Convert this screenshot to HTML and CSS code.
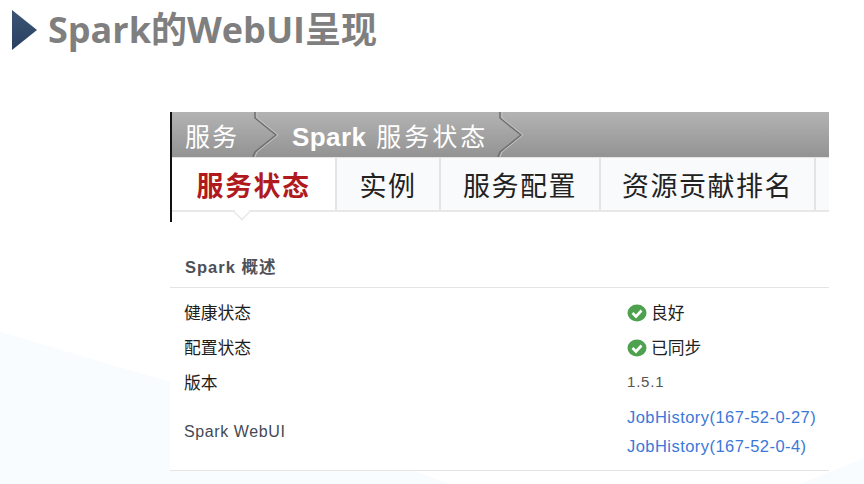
FILE: index.html
```html
<!DOCTYPE html>
<html lang="zh-CN">
<head>
  <meta charset="UTF-8">
  <title>Spark的WebUI呈现</title>
  <link rel="stylesheet" href="styles.css">
</head>
<body>

  <svg class="backdrop" width="864" height="484" viewBox="0 0 864 484">
    <polygon points="0,332 170,382 450,484 0,484" fill="#f8fcfe"/>
    <polygon points="800,484 864,458 864,484" fill="#f8fcfe"/>
  </svg>

  <div class="slide">
    <div class="title">
      <svg class="arrow" width="26" height="40" viewBox="0 0 26 40">
        <defs>
          <linearGradient id="arrowFill" x1="0" y1="0" x2="0" y2="1">
            <stop offset="0" stop-color="#3c5575"/>
            <stop offset="1" stop-color="#2a4060"/>
          </linearGradient>
        </defs>
        <polygon points="0,0 25,20 0,40" fill="url(#arrowFill)"/>
      </svg>
      <h1>Spark的WebUI呈现</h1>
    </div>

    <div class="panel">
      <div class="nav-top">
        <div class="crumbs">
          <span class="crumb-first">服务</span>
          <svg class="chevron" width="28" height="45" viewBox="0 0 28 45">
            <path d="M3 0 L3 6 L24 23 L3 40 L1 45" fill="none" stroke="#6f6f6f" stroke-width="1.5"/>
            <path d="M5 0 L5 6 L26 23 L5 40 L3 45" fill="none" stroke="#c4c4c4" stroke-width="1"/>
          </svg>
          <span class="crumb-current"><b>Spark</b> 服务状态</span>
          <svg class="chevron" width="28" height="45" viewBox="0 0 28 45">
            <path d="M3 0 L3 6 L24 23 L3 40 L1 45" fill="none" stroke="#6f6f6f" stroke-width="1.5"/>
            <path d="M5 0 L5 6 L26 23 L5 40 L3 45" fill="none" stroke="#c4c4c4" stroke-width="1"/>
          </svg>
        </div>

        <div class="tabs">
          <div class="tab active">服务状态</div>
          <div class="tab tab-instance">实例</div>
          <div class="tab tab-config">服务配置</div>
          <div class="tab tab-rank">资源贡献排名</div>
          <div class="tab tab-stub"></div>
        </div>
      </div>

      <div class="summary">
        <div class="summary-head">Spark 概述</div>

        <div class="row">
          <div class="label">健康状态</div>
          <div class="value">
            <svg class="check" width="20" height="18" viewBox="0 0 20 18">
              <ellipse cx="10" cy="9" rx="9.5" ry="8.5" fill="#4ea24f"/>
              <path d="M5.5 9 L9 12.5 L14.5 6.5" fill="none" stroke="#fff" stroke-width="2.6"/>
            </svg>
            良好
          </div>
        </div>
        <div class="row">
          <div class="label">配置状态</div>
          <div class="value">
            <svg class="check" width="20" height="18" viewBox="0 0 20 18">
              <ellipse cx="10" cy="9" rx="9.5" ry="8.5" fill="#4ea24f"/>
              <path d="M5.5 9 L9 12.5 L14.5 6.5" fill="none" stroke="#fff" stroke-width="2.6"/>
            </svg>
            已同步
          </div>
        </div>
        <div class="row">
          <div class="label">版本</div>
          <div class="value version">1.5.1</div>
        </div>
        <div class="row row-links">
          <div class="label latin">Spark WebUI</div>
          <div class="value links">
            <a href="#">JobHistory(167-52-0-27)</a>
            <a href="#">JobHistory(167-52-0-4)</a>
          </div>
        </div>
      </div>
    </div>
  </div>

</body>
</html>
```

FILE: styles.css
```css
html, body {
  margin: 0;
  height: 100%;
}

body {
  background: #fff;
  font-family: "Liberation Sans", "Noto Sans CJK SC", sans-serif;
  color: #222;
  overflow: hidden;
}

.backdrop {
  position: absolute;
  left: 0;
  top: 0;
}

.slide {
  display: flex;
  flex-direction: column;
  height: 484px;
  position: relative;
}

.title {
  display: flex;
  align-items: center;
  height: 40px;
  margin: 10px 0 0 12px;
}

.arrow {
  flex: none;
  margin-right: 10px;
}

.title h1 {
  margin: 0;
  font-family: "Open Sans", "Noto Sans CJK SC", sans-serif;
  font-size: 36px;
  line-height: 40px;
  font-weight: 700;
  color: #7f7f7f;
}

.panel {
  width: 659px;
  margin: 62px 0 0 170px;
  background: #fff;
}

.nav-top {
  border-left: 2px solid #111;
  height: 110px;
}

.crumbs {
  display: flex;
  align-items: center;
  height: 45px;
  background: linear-gradient(#b3b3b3, #939393);
  border-bottom: 1px solid #e4e4e4;
  padding-left: 13px;
  color: #fff;
}

.crumb-first {
  font-size: 25px;
  letter-spacing: 2px;
  margin-right: 13px;
}

.chevron {
  flex: none;
}

.crumb-current {
  font-size: 25px;
  letter-spacing: 3px;
  margin: 0 9px 0 12px;
}

.crumb-current b {
  font-size: 26px;
  letter-spacing: 0.4px;
}

.tabs {
  display: flex;
  height: 52px;
  background: #fff;
  border-bottom: 2px solid #e8e8e8;
}

.tab {
  display: flex;
  align-items: center;
  justify-content: center;
  background: #f9fafb;
  border-right: 2px solid #e2e4e6;
  box-sizing: border-box;
  font-size: 27px;
  letter-spacing: 1.5px;
  color: #222;
}

.tab.active {
  position: relative;
  width: 165px;
  background: #fff;
  color: #b01a1e;
  font-weight: 700;
}

.tab.active::after {
  content: "";
  position: absolute;
  left: 62px;
  bottom: -10px;
  width: 14px;
  height: 14px;
  background: #fff;
  border-right: 2px solid #e8e8e8;
  border-bottom: 2px solid #e8e8e8;
  transform: rotate(45deg) scale(0.75);
}

.tab-instance { width: 104px; }
.tab-config { width: 160px; }
.tab-rank { width: 215px; }
.tab-stub { flex: 1; border-right: 0; }

.summary {
  width: 659px;
  background: #fff;
  border-bottom: 1px solid #e4e4e4;
}

.summary-head {
  box-sizing: border-box;
  height: 66px;
  line-height: 91px;
  padding-left: 15px;
  border-bottom: 1px solid #e4e4e4;
  font-size: 16.5px;
  font-weight: 700;
  letter-spacing: 1px;
  color: #4c5058;
}

.row {
  display: flex;
  align-items: center;
  height: 35px;
}

.row:nth-child(2) {
  margin-top: 6px;
}

.row-links {
  height: 71px;
  box-sizing: border-box;
  padding-bottom: 6px;
}

.label {
  width: 457px;
  padding-left: 14px;
  box-sizing: border-box;
  font-size: 16.8px;
  color: #1d1d1d;
}

.label.latin {
  font-size: 16px;
  letter-spacing: 0.6px;
  color: #444a55;
}

.value {
  display: flex;
  align-items: center;
  font-size: 16.8px;
  color: #222;
}

.check {
  flex: none;
  margin: 2px 4px 0 0;
}

.version {
  font-size: 15px;
  letter-spacing: 0.8px;
  color: #555;
}

.links {
  flex-direction: column;
  align-items: flex-start;
  gap: 8px;
}

.links a {
  font-size: 16.5px;
  line-height: 21px;
  letter-spacing: 0.45px;
  color: #3b78d8;
  text-decoration: none;
}
```
